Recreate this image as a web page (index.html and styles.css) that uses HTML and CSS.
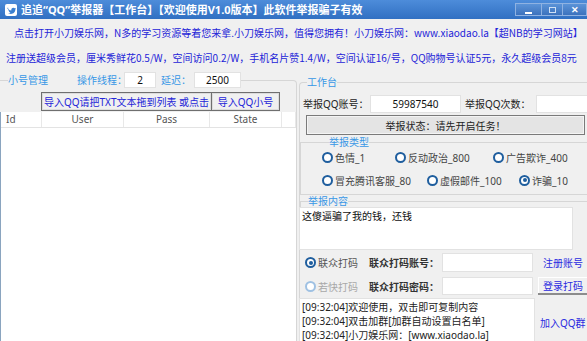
FILE: index.html
```html
<!DOCTYPE html>
<html lang="zh-CN">
<head>
<meta charset="UTF-8" />
<title>追追“QQ”举报器</title>
<link rel="stylesheet" href="styles.css">
</head>
<body>
<div class="window">
  <div class="titlebar">
    <svg class="app-icon" width="12" height="12" viewBox="0 0 12 12">
      <rect x="0" y="0" width="12" height="12" rx="2" fill="#fff"/>
      <path d="M2.2 4.2c1.2 1.4 2.6 2.1 4.1 2.2-.3-1.5.8-2.7 2-2.7.6 0 1.1.2 1.5.6l1-.4-.5.8.7-.2-.6.7c0 2.6-1.9 4.7-4.6 4.7-1 0-2-.3-2.8-.8 1 .1 1.8-.2 2.5-.7-.8 0-1.5-.6-1.7-1.3.3 0 .5 0 .8-.1-.9-.2-1.5-.9-1.5-1.8.3.1.5.2.8.2-.8-.6-1-1.6-.7-2.2z" fill="#3a7fd0"/>
    </svg>
    <span class="title">追追“QQ”举报器【工作台】【欢迎使用V1.0版本】此软件举报骗子有效</span>
    <div class="win-btns">
      <span class="wbtn min"><i></i></span>
      <span class="wbtn max"><i></i></span>
      <span class="wbtn close">✕</span>
    </div>
  </div>

  <div class="notice">
    <p class="l1">点击打开小刀娱乐网，N多的学习资源等着您来拿.小刀娱乐网，值得您拥有！小刀娱乐网：www.xiaodao.la【超NB的学习网站】</p>
    <p class="l2">注册送超级会员，厘米秀鲜花0.5/W，空间访问0.2/W，手机名片赞1.4/W，空间认证16/号，QQ购物号认证5元，永久超级会员8元</p>
  </div>

  <div class="main">
    <fieldset class="group accounts">
      <legend>
        <span class="legend-row">
          <span class="cap">小号管理</span>
          <span class="cap lbl-threads">操作线程：</span>
          <input class="num threads" type="text" value="2" />
          <span class="cap lbl-delay">延迟：</span>
          <input class="num delay" type="text" value="2500" />
        </span>
      </legend>
      <div class="import-row">
        <button class="import-btn wide">导入QQ请把TXT文本拖到列表 或点击</button>
        <button class="import-btn">导入QQ小号</button>
      </div>
      <div class="list">
        <div class="list-head">
          <span class="col-id">Id</span>
          <span>User</span>
          <span>Pass</span>
          <span>State</span>
          <span></span>
        </div>
      </div>
    </fieldset>

    <div class="work">
      <fieldset class="group desk">
        <legend class="cap">工作台</legend>
        <div class="target-row">
          <span class="lbl qq-lbl">举报QQ账号：</span>
          <input class="field qq" type="text" value="59987540" />
          <span class="lbl times-lbl">举报QQ次数：</span>
          <input class="field times" type="text" value="" />
        </div>
        <button class="status-btn">举报状态：请先开启任务！</button>

        <fieldset class="group kinds">
          <legend class="cap">举报类型</legend>
          <div class="opt-row">
            <label class="opt w73"><input type="radio" name="kind" />色情_1</label>
            <label class="opt w98"><input type="radio" name="kind" />反动政治_800</label>
            <label class="opt"><input type="radio" name="kind" />广告欺诈_400</label>
          </div>
          <div class="opt-row">
            <label class="opt w105"><input type="radio" name="kind" />冒充腾讯客服_80</label>
            <label class="opt w92"><input type="radio" name="kind" />虚假邮件_100</label>
            <label class="opt"><input type="radio" name="kind" checked />诈骗_10</label>
          </div>
        </fieldset>

        <fieldset class="group reason">
          <legend class="cap">举报内容</legend>
          <textarea class="reason-text">这傻逼骗了我的钱，还钱</textarea>
        </fieldset>

        <div class="code-row">
          <label class="opt code-opt"><input type="radio" name="coder" checked />联众打码</label>
          <span class="code-lbl">联众打码账号：</span>
          <input class="field code-input" type="text" />
          <span class="link-btn reg">注册账号</span>
        </div>
        <div class="code-row second">
          <label class="opt code-opt off"><input type="radio" name="coder" disabled />若快打码</label>
          <span class="code-lbl">联众打码密码：</span>
          <input class="field code-input" type="password" />
          <button class="login-btn">登录打码</button>
        </div>

        <div class="log-row">
          <div class="log">
            <div>[09:32:04]欢迎使用，双击即可复制内容</div>
            <div>[09:32:04]双击加群[加群自动设置白名单]</div>
            <div>[09:32:04]小刀娱乐网：[www.xiaodao.la]</div>
          </div>
          <span class="link-btn join">加入QQ群</span>
        </div>
      </fieldset>
    </div>
  </div>
</div>
</body>
</html>
```

FILE: styles.css
```css
/* Base */
*, *::before, *::after {
  box-sizing: border-box;
}
body {
  margin: 0;
  background: #f0f0f0;
  font-family: "Noto Sans", "Noto Sans CJK SC", sans-serif;
  font-size: 10px;
  color: #222;
  overflow: hidden;
}
input, button, textarea {
  font-family: inherit;
  font-size: 10px;
  margin: 0;
}
.window {
  width: 587px;
  height: 341px;
  overflow: hidden;
}
/* Title bar */
.titlebar {
  height: 19px;
  display: flex;
  align-items: center;
  padding-left: 5px;
  background: linear-gradient(#4d8cda, #3170c2);
  color: #fff;
}
.app-icon {
  flex-shrink: 0;
}
.title {
  flex: 1;
  margin-left: 4px;
  font-size: 11px;
  font-weight: bold;
  white-space: nowrap;
  line-height: 19px;
}
.win-btns {
  display: flex;
  align-self: flex-start;
  margin-top: 3px;
}
.wbtn {
  height: 13px;
  display: flex;
  align-items: center;
  justify-content: center;
  background: linear-gradient(#5b93d8, #3c72bd);
  border: 1px solid #8fb2e2;
  color: #fff;
}
.wbtn.min { width: 27px; }
.wbtn.max { width: 21px; border-left: 0; }
.wbtn.close { width: 24px; border-left: 0; font-size: 9px; font-weight: bold; }
.wbtn.min i {
  width: 7px; height: 2px;
  margin-top: 6px;
  background: #fff;
}
.wbtn.max i {
  width: 7px; height: 6px;
  border: 1px solid #cfe0f5;
}
/* Notice lines */
.notice {
  padding-top: 7px;
  font-family: "Noto Sans CJK SC", sans-serif;
  font-size: 10px;
  line-height: 14px;
  color: #2424d8;
}
.notice p {
  margin: 0;
  white-space: nowrap;
}
.notice .l1 { padding-left: 14px; }
.notice .l2 { padding-left: 6px; margin-top: 11px; }
/* Layout */
.main {
  display: flex;
  align-items: flex-start;
}
.group {
  margin: 0;
  padding: 0;
  min-width: 0;
  border: 1px solid #d6d6d6;
}
.cap {
  color: #3797e6;
  line-height: 14px;
}
/* Left: account list */
.accounts {
  flex-shrink: 0;
  width: 297px;
  height: 300px;
  margin-top: 7px;
  padding-top: 4px;
  border-left: 0;
  border-radius: 0 4px 0 0;
}
.accounts legend {
  padding: 0;
  margin-left: 8px;
}
.legend-row {
  display: flex;
  align-items: center;
  height: 16px;
}
.lbl-threads { margin-left: 29px; margin-right: -3px; }
.lbl-delay { margin-left: 5px; margin-right: 3px; }
.num {
  height: 16px;
  padding: 0;
  border: 1px solid #e2e2e2;
  background: #fff;
  text-align: center;
  color: #111;
}
.num.threads { width: 32px; }
.num.delay { width: 47px; }
.import-row {
  display: flex;
  margin-left: 41px;
}
.import-btn {
  height: 19px;
  width: 69px;
  padding: 0;
  background: #f0f0f0;
  border: 1px solid #6f6f6f;
  box-shadow: inset 0 0 0 1px #dcdcdc;
  color: #2424d8;
}
.import-btn.wide {
  width: 170px;
  border-right: 0;
}
.list {
  margin-top: 1px;
  height: 240px;
  background: #fff;
  border-left: 1px solid #8aa4bf;
}
.list-head {
  display: grid;
  grid-template-columns: 41px 82px 86px 72px 1fr;
  height: 16px;
  line-height: 15px;
  border-bottom: 1px solid #e3e3e3;
  color: #555;
}
.list-head span {
  text-align: center;
  border-right: 1px solid #e8e8e8;
}
.list-head .col-id {
  text-align: left;
  padding-left: 5px;
}
/* Right: work desk */
.work {
  flex: 1;
  min-width: 0;
  margin-left: 2px;
}
.desk {
  margin-top: 10px;
  padding: 6px 0 0 3px;
  border-right: 0;
  border-bottom: 0;
  border-radius: 4px 0 0 0;
}
.desk > legend {
  padding: 0;
  margin-left: 4px;
}
.target-row {
  display: flex;
  align-items: center;
  height: 18px;
}
.lbl {
  flex-shrink: 0;
  line-height: 14px;
  color: #222;
}
.qq-lbl { width: 67px; }
.times-lbl { width: 71px; margin-left: 4px; }
.field {
  flex-shrink: 0;
  height: 18px;
  padding: 0;
  border: 1px solid #e2e2e2;
  background: #fff;
  text-align: center;
  color: #111;
}
.field.qq { width: 91px; }
.field.times { width: 60px; }
.status-btn {
  display: block;
  width: 279px;
  height: 20px;
  margin: 2px 0 0 3px;
  padding: 0;
  background: #e4e4e4;
  border: 1px solid #7a7a7a;
  box-shadow: inset 0 0 0 1px #f4f4f4;
  color: #222;
}
.kinds, .reason {
  margin-left: -3px;
  border-right: 0;
}
.kinds legend, .reason legend {
  padding: 0;
  margin-left: 7px;
}
.kinds {
  padding: 0 0 6px 21px;
}
.opt-row {
  display: flex;
  align-items: center;
  height: 16px;
}
.opt-row + .opt-row {
  margin-top: 7px;
}
.opt {
  flex-shrink: 0;
  display: flex;
  align-items: center;
  color: #444;
  white-space: nowrap;
}
.opt input {
  appearance: none;
  width: 11px;
  height: 11px;
  margin: 0 2px 0 0;
  border: 2px solid #1f5e9e;
  border-radius: 50%;
  background: #fff;
  display: grid;
  place-content: center;
}
.opt input:checked::after {
  content: "";
  width: 4px;
  height: 4px;
  border-radius: 50%;
  background: #1f5e9e;
}
.w73 { width: 73px; }
.w98 { width: 98px; }
.w105 { width: 105px; }
.w92 { width: 92px; }
.reason {
  padding: 0;
  border-bottom: 0;
}
.reason legend {
  line-height: 12px;
}
.reason-text {
  display: block;
  width: 274px;
  height: 43px;
  margin-left: -2px;
  padding: 1px 2px;
  border: 1px solid #e2e2e2;
  resize: none;
  background: #fff;
  color: #111;
  line-height: 14px;
}
/* Captcha service */
.code-row {
  display: flex;
  align-items: center;
  height: 19px;
  margin-top: 3px;
  padding-left: 2px;
}
.code-row.second {
  margin-top: 5px;
  height: 18px;
}
.code-opt {
  width: 64px;
  color: #555;
}
.code-opt.off {
  color: #a8a8a8;
}
.code-opt.off input {
  border-color: #9fc1e3;
}
.code-lbl {
  flex-shrink: 0;
  width: 73px;
  color: #333;
  font-weight: 600;
}
.code-input {
  width: 91px;
  height: 100%;
}
.link-btn {
  flex-shrink: 0;
  color: #2a2ae0;
  white-space: nowrap;
}
.reg {
  margin-left: 10px;
}
.login-btn {
  flex-shrink: 0;
  margin-left: 5px;
  width: 52px;
  height: 18px;
  padding: 0 0 0 5px;
  text-align: left;
  background: #f0f0f0;
  border: 0;
  border-right: 1px solid #9a9a9a;
  border-bottom: 2px solid #8c8c8c;
  box-shadow: inset 1px 1px 0 #fff;
  color: #2a2ae0;
}
.log-row {
  display: flex;
  align-items: flex-start;
  margin-top: 3px;
  margin-left: -4px;
}
.log {
  flex-shrink: 0;
  width: 236px;
  height: 50px;
  padding: 1px 2px;
  background: #fff;
  border: 1px solid #e2e2e2;
  line-height: 14px;
  color: #222;
  white-space: nowrap;
}
.join {
  margin: 17px 0 0 5px;
}
```
